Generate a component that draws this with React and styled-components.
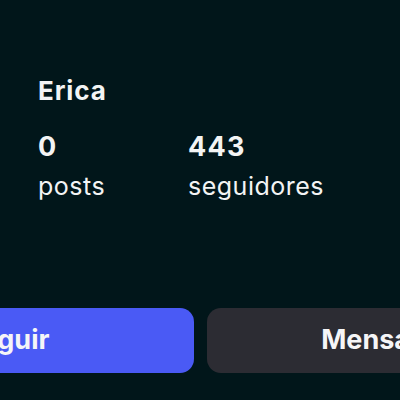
import React from "react";
import styled, { createGlobalStyle } from "styled-components";

const Global = createGlobalStyle`
  html, body {
    margin: 0;
    padding: 0;
    background: #01161a;
    overflow: hidden;
  }
  body {
    font-family: Inter, "Noto Sans", "Liberation Sans", sans-serif;
    color: #f3f4f4;
  }
`;

const Page = styled.div`
  width: 400px;
  height: 400px;
  overflow: hidden;
  background: #01161a;
  display: flex;
  flex-direction: column;
`;

const Info = styled.div`
  padding: 75px 0 0 38px;
  display: flex;
  flex-direction: column;
  gap: 24px;
`;

const Name = styled.div`
  font-size: 26px;
  line-height: 32px;
  font-weight: 700;
  letter-spacing: 0.9px;
`;

const Stats = styled.div`
  display: grid;
  grid-template-columns: 150px auto;
`;

const Stat = styled.div`
  display: flex;
  flex-direction: column;
  gap: 8px;
`;

const Number = styled.div`
  font-size: 27px;
  line-height: 32px;
  font-weight: 700;
  letter-spacing: 1.2px;
`;

const Label = styled.div`
  font-size: 25px;
  line-height: 30px;
  font-weight: 400;
  letter-spacing: 0.5px;
`;

const Buttons = styled.div`
  margin: 107px 0 0 -181px;
  display: flex;
  gap: 13px;
  width: 763px;
`;

const Button = styled.button`
  flex: 0 0 375px;
  height: 65px;
  border: none;
  border-radius: 14px;
  background: ${(p) => (p.$primary ? "#4a5af5" : "#2c2c33")};
  color: #f5f5f7;
  font-family: Inter, "Noto Sans", "Liberation Sans", sans-serif;
  font-size: 27px;
  font-weight: 700;
  padding: 0 0 2px;
  cursor: pointer;
`;

export default function App() {
  return (
    <>
      <Global />
      <Page>
        <Info>
          <Name>Erica</Name>
          <Stats>
            <Stat>
              <Number>0</Number>
              <Label>posts</Label>
            </Stat>
            <Stat>
              <Number>443</Number>
              <Label>seguidores</Label>
            </Stat>
          </Stats>
        </Info>
        <Buttons>
          <Button $primary>Seguir</Button>
          <Button>Mensagem</Button>
        </Buttons>
      </Page>
    </>
  );
}
